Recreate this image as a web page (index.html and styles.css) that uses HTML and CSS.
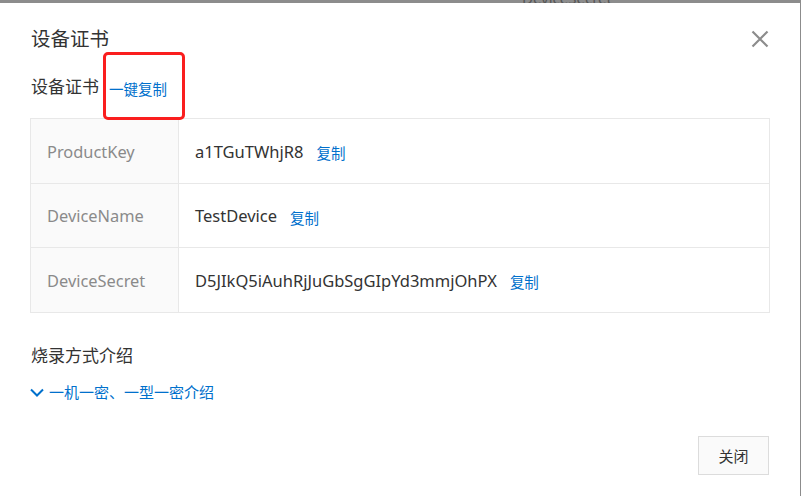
FILE: index.html
```html
<!DOCTYPE html>
<html lang="zh">
<head>
<meta charset="utf-8">
<title>设备证书</title>
<link rel="stylesheet" href="styles.css">
</head>
<body>
<div class="backdrop"><span class="bg-text">DeviceSecret</span></div>
<div class="dialog">
  <div class="header">
    <div class="title">设备证书</div>
    <svg class="close" width="18" height="18" viewBox="0 0 18 18"><path d="M1.5 1.5 L16.5 16.5 M16.5 1.5 L1.5 16.5" stroke="#8c8c8c" stroke-width="2.2" fill="none"/></svg>
  </div>
  <div class="subtitle"><span class="sub-text">设备证书</span><a class="link copy-all">一键复制</a><span class="highlight"></span></div>
  <div class="table">
    <div class="row">
      <div class="cell-label">ProductKey</div>
      <div class="cell-value"><span>a1TGuTWhjR8</span><a class="link">复制</a></div>
    </div>
    <div class="row row-mid">
      <div class="cell-label">DeviceName</div>
      <div class="cell-value"><span>TestDevice</span><a class="link">复制</a></div>
    </div>
    <div class="row">
      <div class="cell-label">DeviceSecret</div>
      <div class="cell-value"><span>D5JIkQ5iAuhRjJuGbSgGIpYd3mmjOhPX</span><a class="link">复制</a></div>
    </div>
  </div>
  <div class="section-title">烧录方式介绍</div>
  <div class="expand link">
    <svg class="chevron" width="14" height="9" viewBox="0 0 14 9"><path d="M1 1.5 L7 7.5 L13 1.5" stroke="#0070cc" stroke-width="2" fill="none"/></svg>
    <span>一机一密、一型一密介绍</span>
  </div>
  <div class="footer">
    <button class="btn">关闭</button>
  </div>
</div>
</body>
</html>
```
FILE: styles.css
```css
html, body {
  margin: 0;
  padding: 0;
}
body {
  width: 801px;
  height: 496px;
  background: #8c8c8c;
  overflow: hidden;
  font-family: "Noto Sans", "Noto Sans CJK SC", sans-serif;
  color: #333;
}
.backdrop {
  height: 3px;
  overflow: hidden;
  position: relative;
}
.bg-text {
  position: absolute;
  left: 522px;
  top: -12px;
  font-size: 15px;
  color: #555;
}
.dialog {
  position: relative;
  width: 800px;
  height: 493px;
  background: #fff;
  box-sizing: border-box;
  padding: 22px 31px 0 30px;
}
.header {
  display: flex;
  align-items: center;
  justify-content: space-between;
  height: 28px;
}
.title {
  font-size: 19.5px;
  line-height: 28px;
  margin-left: 1px;
  color: #333;
}
.close {
  margin-top: -1px;
}
.subtitle {
  position: relative;
  margin-top: 22px;
  height: 24px;
  display: flex;
  align-items: center;
}
.sub-text {
  font-size: 17px;
  line-height: 24px;
  margin-left: 1px;
  color: #333;
}
.link {
  color: #0070cc;
  font-size: 14.5px;
  cursor: pointer;
}
.copy-all {
  margin-left: 10px;
  margin-top: 2px;
}
.highlight {
  position: absolute;
  left: 73px;
  top: -23px;
  width: 76px;
  height: 62px;
  border: 3px solid #fa1e1e;
  border-radius: 5px;
}
.table {
  margin-top: 19px;
  width: 740px;
  border: 1px solid #e8e8e8;
  box-sizing: border-box;
}
.row {
  display: flex;
  height: 64px;
  border-bottom: 1px solid #e8e8e8;
}
.row-mid {
  height: 63px;
}
.row:last-child {
  border-bottom: none;
}
.cell-label {
  width: 148px;
  background: #fafafa;
  border-right: 1px solid #e8e8e8;
  display: flex;
  align-items: center;
  padding-left: 16px;
  box-sizing: border-box;
  font-size: 16.4px;
  color: #8a8a8a;
}
.cell-value {
  display: flex;
  align-items: center;
  padding-left: 16px;
  font-size: 16.5px;
  color: #333;
}
.cell-value .link {
  margin-left: 13px;
  margin-top: 3px;
}
.section-title {
  margin-top: 31px;
  font-size: 17px;
  line-height: 24px;
  margin-left: 1px;
  color: #333;
}
.expand {
  margin-top: 14px;
  display: flex;
  align-items: center;
  font-size: 15px;
  line-height: 20px;
}
.chevron {
  margin-right: 5px;
}
.footer {
  margin-top: 34px;
  display: flex;
  justify-content: flex-end;
}
.btn {
  width: 71px;
  height: 39px;
  background: #fafafa;
  border: 1px solid #dcdcdc;
  font-family: "Noto Sans CJK SC", sans-serif;
  font-size: 15px;
  color: #333;
  padding: 0;
}
```
